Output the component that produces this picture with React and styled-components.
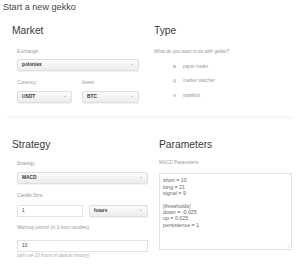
import React from 'react';
import styled, { createGlobalStyle } from 'styled-components';

const Global = createGlobalStyle`
    html, body {
        margin: 0;
        background: #fff;
    }
    body {
        font-family: "Liberation Sans", Arial, sans-serif;
        color: #333;
    }
`

const params = `short = 10
long = 21
signal = 9

[thresholds]
down = -0.025
up = 0.025
persistence = 1`

const Select = ({ value }) => (
    <SelectBox>
        <span>{value}</span>
        <Arrow />
    </SelectBox>
)

const App = () => {
    return (
        <Page>
            <Global />
            <Title>Start a new gekko</Title>
            <Row>
                <Column pad={12}>
                    <Heading top={11}>Market</Heading>
                    <Fields width={122}>
                        <Field top={12.4} gap={3.6}>
                            <Label>Exchange:</Label>
                            <Select value="poloniex" />
                        </Field>
                        <Pair cols="55px 57px" gap={10}>
                            <Field top={9.4} gap={4.6}>
                                <Label>Currency:</Label>
                                <Select value="USDT" />
                            </Field>
                            <Field top={9.4} gap={4.6}>
                                <Label>Asset:</Label>
                                <Select value="BTC" />
                            </Field>
                        </Pair>
                    </Fields>
                </Column>
                <Column pad={4}>
                    <Heading top={11}>Type</Heading>
                    <Field top={12.4} gap={0}>
                        <Label>What do you want to do with gekko?</Label>
                    </Field>
                    <RadioList>
                        <RadioRow><RadioDot checked /><RadioText>paper trader</RadioText></RadioRow>
                        <RadioRow><RadioDot /><RadioText>market watcher</RadioText></RadioRow>
                        <RadioRow><RadioDot /><RadioText>tradebot</RadioText></RadioRow>
                    </RadioList>
                </Column>
            </Row>
            <Divider />
            <Row>
                <Column pad={12}>
                    <Heading top={19.4}>Strategy</Heading>
                    <Fields width={131}>
                        <Field top={9.3} gap={5.3}>
                            <Label>Strategy:</Label>
                            <Select value="MACD" />
                        </Field>
                        <Field top={9.1} gap={5.9}>
                            <Label>Candle Size:</Label>
                            <Pair cols="66px 59px" gap={6}>
                                <InputBox>1</InputBox>
                                <Select value="hours" />
                            </Pair>
                        </Field>
                        <Field top={8.4} gap={8.6}>
                            <Label>Warmup period (in 1 hour candles):</Label>
                            <InputBox>10</InputBox>
                        </Field>
                        <Note>(will use 10 hours of data as history)</Note>
                    </Fields>
                </Column>
                <Column pad={9}>
                    <Heading top={19.4}>Parameters</Heading>
                    <Field top={8.7} gap={6.9}>
                        <Label>MACD Parameters:</Label>
                        <ParamBox>
                            {params}
                            <Grip viewBox="0 0 4 4">
                                <path d="M4 0L0 4M4 2L2 4" stroke="#bbb" strokeWidth="0.5" />
                            </Grip>
                        </ParamBox>
                    </Field>
                </Column>
            </Row>
        </Page>
    )
}

export default App

const Page = styled.div`
    width: 300px;
    padding-top: 2px;
`

const Title = styled.h1`
    margin: 0 0 0 3px;
    font-size: 9.1px;
    line-height: 11px;
    font-weight: normal;
    color: #444;
`

const Row = styled.div`
    display: grid;
    grid-template-columns: 150px 150px;
`

const Column = styled.div`
    display: flex;
    flex-direction: column;
    padding-left: ${p => p.pad}px;
`

const Heading = styled.h2`
    margin: ${p => p.top}px 0 0 0;
    font-size: 10.3px;
    line-height: 13px;
    font-weight: normal;
    color: #3a3a3a;
`

const Fields = styled.div`
    display: flex;
    flex-direction: column;
    margin-left: 5px;
    width: ${p => p.width}px;
`

const Field = styled.div`
    display: flex;
    flex-direction: column;
    margin-top: ${p => p.top}px;
    gap: ${p => p.gap}px;
`

const Pair = styled.div`
    display: grid;
    grid-template-columns: ${p => p.cols};
    column-gap: ${p => p.gap}px;
`

const Label = styled.div`
    font-size: 4.7px;
    line-height: 6px;
    color: #9a9a9a;
    white-space: nowrap;
`

const SelectBox = styled.div`
    box-sizing: border-box;
    height: 12px;
    display: flex;
    align-items: center;
    justify-content: space-between;
    padding: 0 5px 0 4px;
    border: 1px solid #dedede;
    border-radius: 2px;
    background: linear-gradient(#fbfbfb, #ececec);
    box-shadow: 0 1px 1px rgba(0, 0, 0, 0.06);
    font-size: 4.8px;
    font-weight: bold;
    color: #333;
`

const Arrow = styled.span`
    width: 0;
    height: 0;
    border-left: 1.2px solid transparent;
    border-right: 1.2px solid transparent;
    border-top: 1.6px solid #999;
`

const InputBox = styled.div`
    box-sizing: border-box;
    height: 12px;
    display: flex;
    align-items: center;
    padding: 0 4px;
    border: 1px solid #e2e2e2;
    background: #fff;
    font-size: 4.8px;
    color: #333;
`

const Note = styled.div`
    margin-top: 1.5px;
    font-size: 4.5px;
    line-height: 6px;
    font-style: italic;
    color: #aaa;
    white-space: nowrap;
`

const RadioList = styled.div`
    display: flex;
    flex-direction: column;
    margin-top: 3.7px;
    padding-left: 18.5px;
`

const RadioRow = styled.div`
    display: flex;
    align-items: center;
    height: 14.5px;
    gap: 7px;
`

const RadioDot = styled.span`
    box-sizing: border-box;
    width: 3.4px;
    height: 3.4px;
    border-radius: 50%;
    border: 0.6px solid #bbb;
    background: ${p => (p.checked ? '#777' : '#f0f0f0')};
    box-shadow: ${p => (p.checked ? 'inset 0 0 0 0.6px #ddd' : 'none')};
`

const RadioText = styled.span`
    font-size: 4.7px;
    color: #9a9a9a;
`

const ParamBox = styled.div`
    position: relative;
    box-sizing: border-box;
    width: 133px;
    height: 77px;
    padding: 3.5px 3px;
    border: 1px solid #e2e2e2;
    background: #fff;
    font-size: 5.3px;
    line-height: 6.3px;
    color: #666;
    white-space: pre;
`

const Grip = styled.svg`
    position: absolute;
    right: 1px;
    bottom: 1px;
    width: 3px;
    height: 3px;
`

const Divider = styled.div`
    height: 3px;
    margin: 13px 8px 0 7px;
    background: #f7f7f7;
`
